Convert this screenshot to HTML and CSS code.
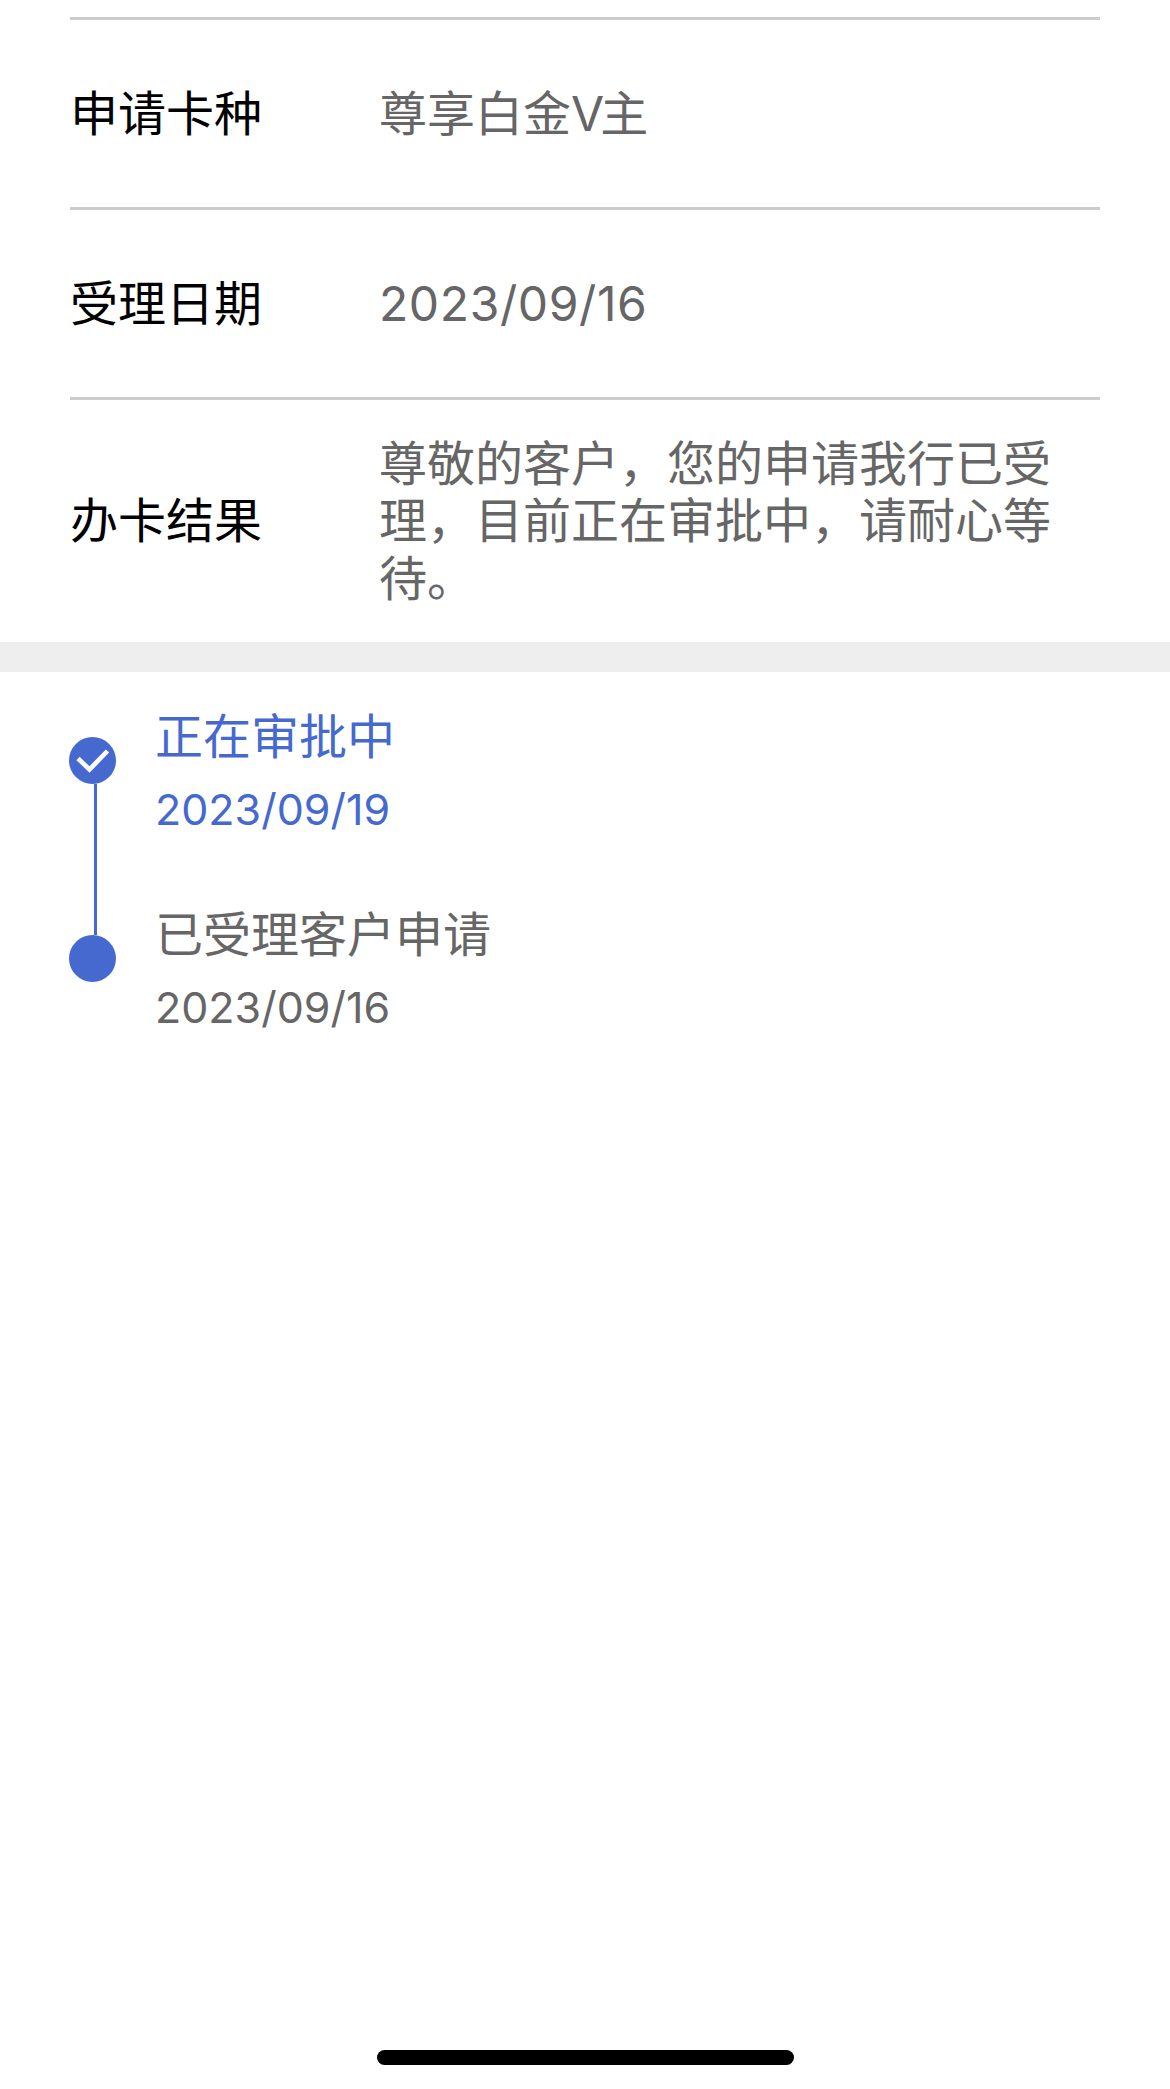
FILE: index.html
```html
<!DOCTYPE html>
<html lang="zh-CN">
<head>
<meta charset="utf-8">
<title>办卡进度</title>
<link rel="stylesheet" href="styles.css">
</head>
<body>
<main class="page">
  <section class="info">
    <div class="row">
      <div class="label">申请卡种</div>
      <div class="value">尊享白金<span class="latin">V</span>主</div>
    </div>
    <div class="row">
      <div class="label">受理日期</div>
      <div class="value value-date">2023/09/16</div>
    </div>
    <div class="row row-tall">
      <div class="label">办卡结果</div>
      <div class="value">尊敬的客户，您的申请我行已受理，目前正在审批中，请耐心等待。</div>
    </div>
  </section>
  <div class="divider"></div>
  <section class="timeline">
    <div class="step step-active">
      <div class="marker">
        <div class="dot">
          <svg class="check" viewBox="0 0 47 47" width="47" height="47" aria-hidden="true">
            <path d="M9 21.5 L20.5 32.5 L38.5 14" fill="none" stroke="#fff" stroke-width="4.6"/>
          </svg>
        </div>
        <div class="connector"></div>
      </div>
      <div class="step-text">
        <div class="step-title">正在审批中</div>
        <div class="step-date">2023/09/19</div>
      </div>
    </div>
    <div class="step">
      <div class="marker">
        <div class="dot"></div>
      </div>
      <div class="step-text">
        <div class="step-title">已受理客户申请</div>
        <div class="step-date">2023/09/16</div>
      </div>
    </div>
  </section>
  <div class="home-indicator"></div>
</main>
</body>
</html>
```

FILE: styles.css
```css
* {
  box-sizing: border-box;
}

html,
body {
  margin: 0;
  padding: 0;
  background: #fff;
}

.page {
  position: relative;
  height: 2089px;
  overflow: hidden;
  padding-top: 17px;
  font-family: "Inter", "Noto Sans CJK SC", sans-serif;
  font-size: 48px;
  line-height: 57.6px;
}

.info {
  padding: 0 70px;
}

.row {
  display: flex;
  align-items: center;
  height: 190px;
  border-top: 3px solid #cccccc;
}

.row-tall {
  height: 245px;
  padding-right: 40px;
}

.label {
  flex: 0 0 309px;
  color: #000;
}

.value {
  flex: 1;
  color: #666;
}

.value-date {
  letter-spacing: 0.6px;
}

.latin {
  letter-spacing: -4px;
}

.divider {
  height: 30px;
  background: #eeeeee;
}

.timeline {
  padding: 36px 0 0 69px;
}

.step {
  display: flex;
  height: 198px;
}

.marker {
  display: flex;
  flex-direction: column;
  flex: 0 0 47px;
  padding-top: 29px;
}

.dot {
  flex: 0 0 47px;
  height: 47px;
  border-radius: 50%;
  background: #4569cf;
}

.check {
  display: block;
}

.connector {
  flex: 1;
  width: 3px;
  margin: 0 0 -29px 25px;
  background: #4569cf;
}

.step-text {
  margin-left: 39px;
  color: #666;
}

.step-active .step-text {
  color: #4569cf;
}

.step-title {
  font-size: 48px;
  line-height: 58px;
}

.step-date {
  margin-top: 18px;
  font-size: 43px;
  line-height: 50px;
}

.home-indicator {
  position: absolute;
  left: 377px;
  bottom: 24px;
  width: 417px;
  height: 15px;
  border-radius: 8px;
  background: #000;
}
```
